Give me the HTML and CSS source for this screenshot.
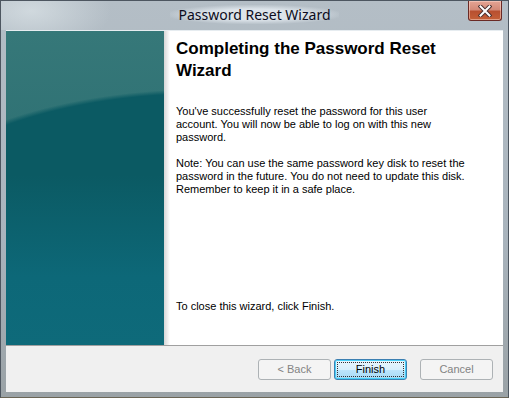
FILE: index.html
```html
<!DOCTYPE html>
<html lang="en">
<head>
    <meta charset="UTF-8">
    <title>Password Reset Wizard</title>
    <link rel="stylesheet" href="styles.css">
</head>
<body>
    <div class="window">
        <div class="titlebar">
            <span class="title">Password Reset Wizard</span>
            <div class="close-btn">
                <svg viewBox="0 0 14 12" width="14" height="12">
                    <path d="M2.5 1.5 L11.5 10.5 M11.5 1.5 L2.5 10.5" stroke="#4a3030" stroke-width="4" stroke-linecap="square"/>
                    <path d="M2.5 1.5 L11.5 10.5 M11.5 1.5 L2.5 10.5" stroke="#fff" stroke-width="2" stroke-linecap="square"/>
                </svg>
            </div>
        </div>
        <div class="client">
            <div class="page">
                <div class="side-art"></div>
                <div class="content">
                    <h1>Completing the Password Reset Wizard</h1>
                    <p>You've successfully reset the password for this user account. You will now be able to log on with this new password.</p>
                    <p>Note: You can use the same password key disk to reset the password in the future. You do not need to update this disk. Remember to keep it in a safe place.</p>
                    <p class="closing">To close this wizard, click Finish.</p>
                </div>
            </div>
            <div class="buttons">
                <button class="btn" disabled>&lt; Back</button>
                <button class="btn default">Finish</button>
                <button class="btn cancel" disabled>Cancel</button>
            </div>
        </div>
    </div>
</body>
</html>
```

FILE: styles.css
```css
body {
    margin: 0;
    background: #fff;
}

.window {
    width: 509px;
    height: 398px;
    box-sizing: border-box;
    display: flex;
    flex-direction: column;
    background: linear-gradient(to bottom, #b4bec6 0%, #a9b4bd 60%, #9aa2a6 100%);
    border: 1px solid #4d5660;
    border-bottom-color: #6b6555;
    padding: 0 5px 5px 5px;
}

.titlebar {
    height: 29px;
    position: relative;
    display: flex;
    justify-content: center;
    align-items: center;
    background: radial-gradient(ellipse 80px 40px at 30px 10px, rgba(220,228,232,0.7), rgba(220,228,232,0) 100%);
    margin: 0 -5px;
}

.title {
    font-family: "Noto Sans", "Open Sans", sans-serif;
    font-size: 14px;
    color: #0c0c20;
    padding: 0 8px;
    margin-top: -2px;
    background: radial-gradient(ellipse at center, rgba(225,232,238,0.9) 40%, rgba(225,232,238,0) 75%);
}

.close-btn {
    position: absolute;
    top: 0;
    right: 6px;
    width: 34px;
    height: 20px;
    box-sizing: border-box;
    border: 1px solid #6a2a25;
    border-top: none;
    border-radius: 0 0 3px 3px;
    background: linear-gradient(to bottom, #e4a494 0%, #d48a78 45%, #b85030 55%, #c46038 100%);
    display: flex;
    justify-content: center;
    align-items: center;
    box-shadow: inset 0 0 0 1px rgba(255,220,210,0.5);
}

.client {
    flex: 1;
    display: flex;
    flex-direction: column;
    border-top: 1px solid #e6ecf0;
    background: #f0f0f0;
}

.page {
    flex: 1;
    display: flex;
    background: #fff;
    border-bottom: 1px solid #a0a0a0;
}

.side-art {
    width: 158px;
    background:
        radial-gradient(ellipse 330px 150px at 200px 208px, #0b5a63 0%, #0b5a63 97%, rgba(11,90,99,0) 100%),
        linear-gradient(to bottom, #367879 0%, #2c6f72 50%, #1a6268 100%);
    position: relative;
}

.side-art::after {
    content: "";
    position: absolute;
    left: 0;
    right: 0;
    bottom: 0;
    height: 170px;
    background: linear-gradient(to bottom, rgba(13,104,118,0) 0%, #0d6878 60%, #0e6a7a 100%);
}

.content {
    flex: 1;
    padding: 7px 38px 0 12px;
    background: linear-gradient(to right, #d6d6d6 0px, #fff 6px);
    font-family: "Liberation Sans", Arial, sans-serif;
    font-size: 11px;
    line-height: 13px;
    color: #000;
    display: flex;
    flex-direction: column;
}

.content h1 {
    font-size: 17px;
    line-height: 22px;
    font-weight: bold;
    margin: 0 0 23px 0;
}

.content p {
    margin: 0 0 13px 0;
}

.content p.closing {
    margin-top: auto;
    margin-bottom: 32px;
}

.buttons {
    height: 46px;
    display: flex;
    align-items: center;
    justify-content: flex-end;
    padding: 0 10px 0 0;
    gap: 3px;
}

.btn {
    width: 73px;
    height: 21px;
    font-family: "Liberation Sans", Arial, sans-serif;
    font-size: 11px;
    border: 1px solid #adb2b5;
    border-radius: 3px;
    background: #f4f4f4;
    color: #838383;
    padding: 0;
}

.btn.default {
    border: 1px solid #3c7fb1;
    color: #000;
    background: linear-gradient(to bottom, #eaf6fd 0%, #d9f0fc 50%, #bee6fd 50%, #a7d9f5 100%);
    box-shadow: inset 0 0 0 1px #48d0f8;
    outline: 1px dotted #333;
    outline-offset: -4px;
}

.btn.cancel {
    margin-left: 10px;
}
```
